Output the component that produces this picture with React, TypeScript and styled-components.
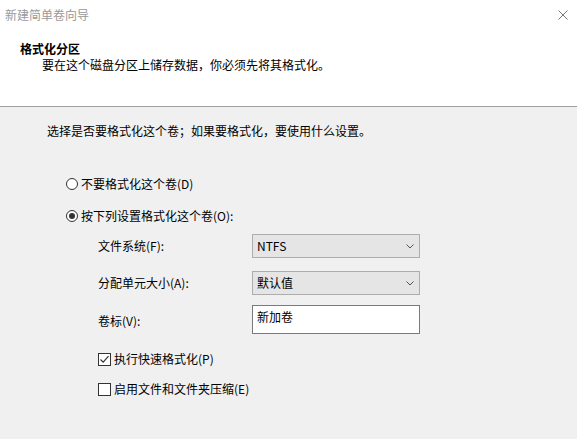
import React from "react";
import styled, { createGlobalStyle } from "styled-components";

const GlobalStyle = createGlobalStyle`
  html, body {
    margin: 0;
    padding: 0;
    background: #f0f0f0;
  }
  body {
    font-family: "Noto Sans CJK SC", "Microsoft YaHei", sans-serif;
    font-size: 12px;
    color: #000;
  }
`;

const Window = styled.div`
  width: 577px;
  height: 439px;
  display: flex;
  flex-direction: column;
  background: #f0f0f0;
  overflow: hidden;
`;

const TitleBar = styled.div`
  height: 30px;
  display: flex;
  align-items: center;
  justify-content: space-between;
  padding: 0 9px 0 5px;
  background: #fff;
  color: #999;
  line-height: 16px;
`;

const CloseIcon = styled.svg`
  width: 10px;
  height: 10px;
  margin-top: -1px;
`;

const Header = styled.div`
  height: 65px;
  padding: 11px 0 0 20px;
  background: #fff;
  border-bottom: 1px solid #a0a0a0;
  line-height: 16px;
`;

const HeaderTitle = styled.div`
  font-weight: bold;
`;

const HeaderSub = styled.div`
  padding-left: 22px;
`;

const Body = styled.div`
  flex: 1;
  padding: 16px 0 0 47px;
  line-height: 16px;
`;

const Options = styled.div`
  margin: 37px 0 0 19px;
  display: flex;
  flex-direction: column;
  gap: 16px;
`;

const Choice = styled.label`
  display: flex;
  align-items: center;
  gap: 3px;
  height: 16px;
`;

const RadioDot = styled.span<{ $checked?: boolean }>`
  box-sizing: border-box;
  width: 12px;
  height: 12px;
  border: 1px solid #333;
  border-radius: 50%;
  background: #fff;
  display: flex;
  align-items: center;
  justify-content: center;
  &::after {
    content: "";
    display: ${(p) => (p.$checked ? "block" : "none")};
    width: 6px;
    height: 6px;
    border-radius: 50%;
    background: #333;
  }
`;

const Settings = styled.div`
  margin: 10px 0 0 51px;
  display: flex;
  flex-direction: column;
`;

const FieldRow = styled.div<{ $top: number }>`
  display: grid;
  grid-template-columns: 154px 168px;
  align-items: center;
  margin-top: ${(p) => p.$top}px;
`;

const Select = styled.div`
  box-sizing: border-box;
  height: 24px;
  display: flex;
  align-items: center;
  justify-content: space-between;
  padding: 0 5px 0 4px;
  background: #e5e5e5;
  border: 1px solid #adadad;
`;

const TextBox = styled.div`
  box-sizing: border-box;
  height: 29px;
  padding: 3px 4px 0;
  background: #fff;
  border: 1px solid #7a7a7a;
  align-self: start;
`;

const LabelTop = styled.span`
  align-self: start;
  padding-top: 8px;
`;

const Checks = styled.div`
  display: flex;
  flex-direction: column;
  gap: 14px;
  margin-top: 17px;
`;

const CheckBox = styled.span`
  box-sizing: border-box;
  width: 13px;
  height: 13px;
  border: 1px solid #333;
  background: #fff;
  display: flex;
  align-items: center;
  justify-content: center;
`;

const Chevron = () => (
  <svg width="8" height="5" viewBox="0 0 8 5">
    <path d="M0.5 0.5 L4 4 L7.5 0.5" fill="none" stroke="#555" strokeWidth="1" />
  </svg>
);

const Tick = () => (
  <svg width="11" height="11" viewBox="0 0 11 11">
    <path d="M1.5 5.5 L4.2 8.2 L9.5 2.2" fill="none" stroke="#333" strokeWidth="1.2" />
  </svg>
);

export default function App() {
  return (
    <>
      <GlobalStyle />
      <Window>
        <TitleBar>
          <span>新建简单卷向导</span>
          <CloseIcon viewBox="0 0 10 10">
            <path d="M0.5 0.5 L9.5 9.5 M9.5 0.5 L0.5 9.5" stroke="#777" strokeWidth="1" />
          </CloseIcon>
        </TitleBar>
        <Header>
          <HeaderTitle>格式化分区</HeaderTitle>
          <HeaderSub>要在这个磁盘分区上储存数据，你必须先将其格式化。</HeaderSub>
        </Header>
        <Body>
          <div>选择是否要格式化这个卷；如果要格式化，要使用什么设置。</div>
          <Options>
            <Choice>
              <RadioDot />
              不要格式化这个卷(D)
            </Choice>
            <Choice>
              <RadioDot $checked />
              按下列设置格式化这个卷(O):
            </Choice>
          </Options>
          <Settings>
            <FieldRow $top={0}>
              <span>文件系统(F):</span>
              <Select>
                <span>NTFS</span>
                <Chevron />
              </Select>
            </FieldRow>
            <FieldRow $top={13}>
              <span>分配单元大小(A):</span>
              <Select>
                <span>默认值</span>
                <Chevron />
              </Select>
            </FieldRow>
            <FieldRow $top={10}>
              <LabelTop>卷标(V):</LabelTop>
              <TextBox>新加卷</TextBox>
            </FieldRow>
            <Checks>
              <Choice>
                <CheckBox>
                  <Tick />
                </CheckBox>
                执行快速格式化(P)
              </Choice>
              <Choice>
                <CheckBox />
                启用文件和文件夹压缩(E)
              </Choice>
            </Checks>
          </Settings>
        </Body>
      </Window>
    </>
  );
}
